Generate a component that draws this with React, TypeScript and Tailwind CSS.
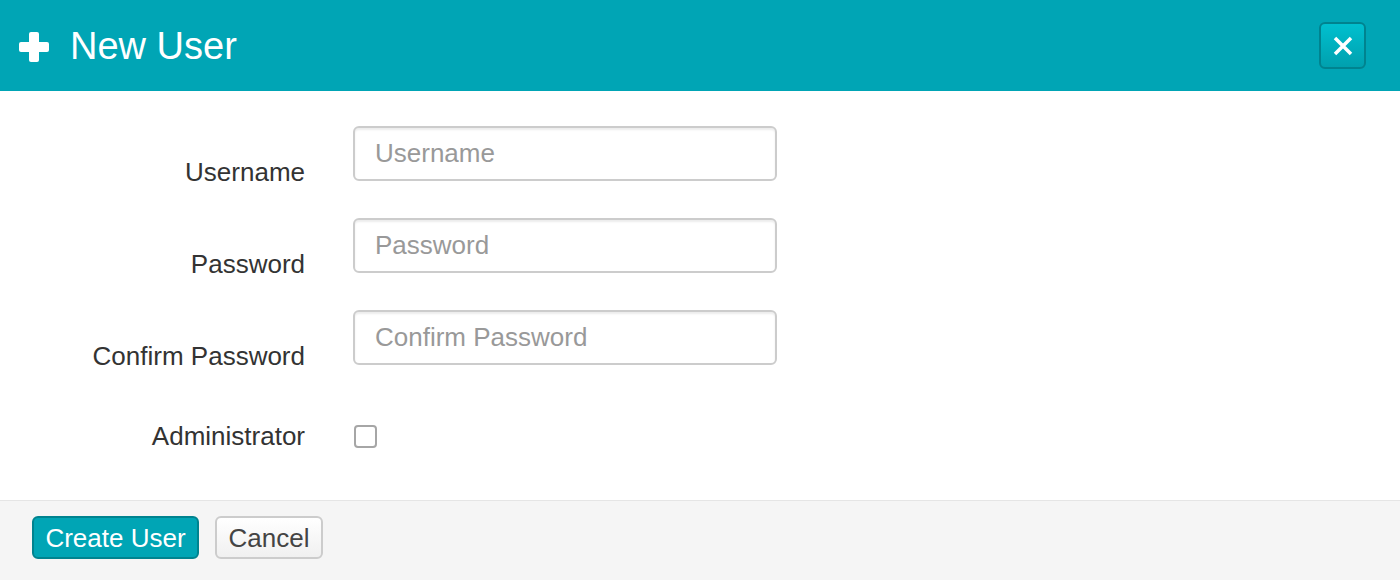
import { useState } from "react";

const font = { fontFamily: '"Liberation Sans", Arial, sans-serif' };

function Field({ label, placeholder, type = "text" }: { label: string; placeholder: string; type?: string }) {
  return (
    <div className="flex h-[65px] items-start">
      <label className="mt-[28px] block w-[305px] text-right text-[26px] leading-[37px] text-[#333333]">{label}</label>
      <input
        type={type}
        placeholder={placeholder}
        className="ml-[48px] h-[55px] w-[424px] rounded-[6px] border-2 border-[#cccccc] bg-white px-[20px] text-[26px] text-[#555555] shadow-[inset_0_2px_2px_rgba(0,0,0,0.075)] placeholder:text-[#999999] focus:outline-none"
      />
    </div>
  );
}

export default function App() {
  const [admin, setAdmin] = useState(false);

  return (
    <div className="h-[580px] w-[1400px] overflow-hidden bg-white" style={font}>
      <div className="flex h-[91px] items-center bg-[#00a5b5] pl-[19px] pr-[34px]">
        <svg width="30" height="30" viewBox="0 0 30 30" className="mt-[2px]">
          <rect x="10" y="0" width="10" height="30" rx="2" fill="white" />
          <rect x="0" y="10" width="30" height="10" rx="2" fill="white" />
        </svg>
        <h1 className="ml-[21px] text-[38px] leading-none text-white">New User</h1>
        <button className="ml-auto flex h-[47px] w-[47px] items-center justify-center rounded-[6px] border-2 border-[#00838f] bg-gradient-to-b from-[#00c0cf] to-[#00a0ae]">
          <svg width="22" height="22" viewBox="0 0 22 22">
            <path d="M3 3 L19 19 M19 3 L3 19" stroke="white" strokeWidth="3.5" strokeLinecap="butt" />
          </svg>
        </button>
      </div>

      <div className="h-[409px] pt-[35px]">
        <div className="flex flex-col gap-[27px]">
          <Field label="Username" placeholder="Username" />
          <Field label="Password" placeholder="Password" type="password" />
          <Field label="Confirm Password" placeholder="Confirm Password" type="password" />
        </div>
        <div className="mt-[43px] flex items-center">
          <span className="block w-[305px] text-right text-[26px] leading-[37px] text-[#333333]">Administrator</span>
          <button
            onClick={() => setAdmin(!admin)}
            className="ml-[49px] flex h-[23px] w-[23px] items-center justify-center rounded-[4px] border-2 border-[#a6a6a6] bg-white"
          >
            {admin && <span className="text-[16px] leading-none text-[#333]">✓</span>}
          </button>
        </div>
      </div>

      <div className="flex h-[80px] items-start gap-[16px] border-t border-[#e5e5e5] bg-[#f5f5f5] pl-[32px] pt-[15px]">
        <button className="h-[43px] w-[167px] rounded-[6px] border-2 border-[#00838f] bg-[#00a5b5] text-[26px] leading-none text-white">
          Create User
        </button>
        <button className="h-[43px] w-[108px] rounded-[6px] border-2 border-[#cccccc] bg-gradient-to-b from-white to-[#f0f0f0] text-[26px] leading-none text-[#444444]">
          Cancel
        </button>
      </div>
    </div>
  );
}
